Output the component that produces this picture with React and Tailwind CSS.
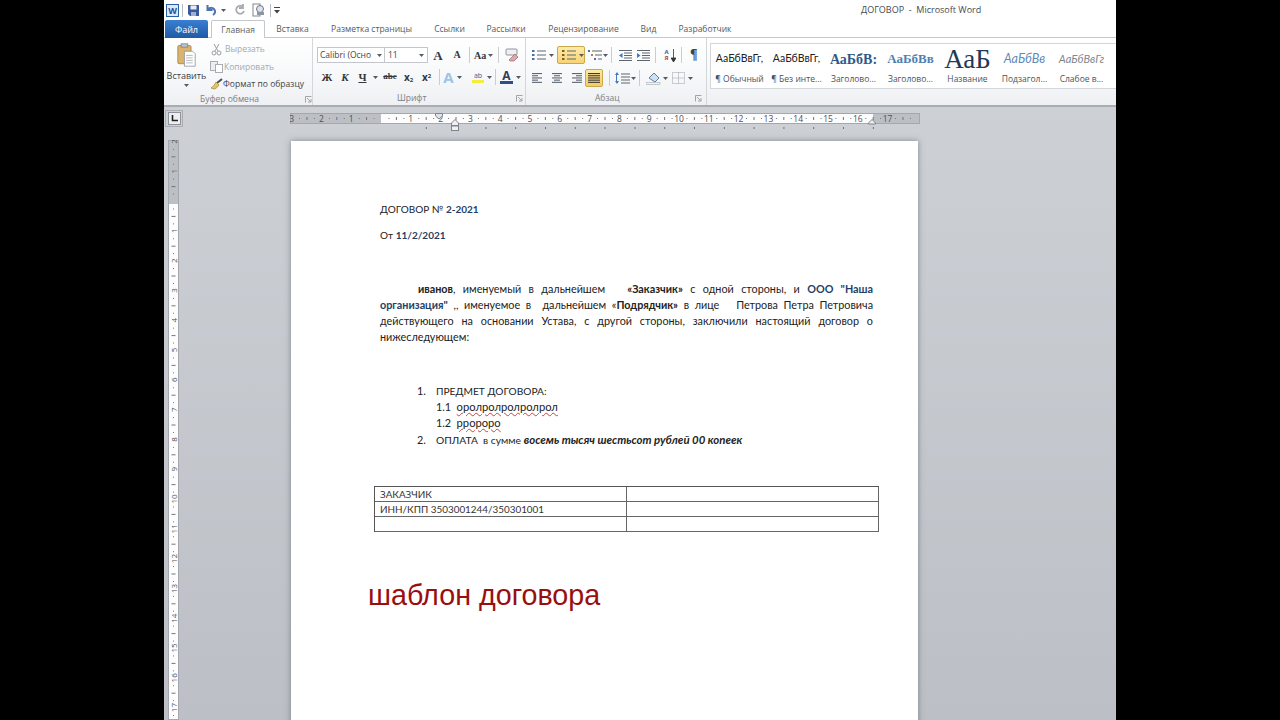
const tabs = [
  ["Вставка", "w-[31px] ml-[12px]"],
  ["Разметка страницы", "w-[81px] ml-[23px]"],
  ["Ссылки", "w-[31px] ml-[22px]"],
  ["Рассылки", "w-[38px] ml-[22px]"],
  ["Рецензирование", "w-[71px] ml-[23px]"],
  ["Вид", "w-[15px] ml-[22px]"],
  ["Разработчик", "w-[54px] ml-[22px]"],
];

const Sep = ({ h = "h-[16px]" }) => <div className={`w-px ${h} bg-[#c9ccd1] shrink-0`} />;

const Caret = ({ className = "" }) => (
  <svg width="5" height="3" viewBox="0 0 5 3" className={`shrink-0 ${className}`}>
    <path d="M0 0h5L2.500 3z" fill="#555b63" />
  </svg>
);

const Launcher = () => (
  <svg width="7" height="7" viewBox="0 0 7 7" className="shrink-0">
    <path d="M.5 6.500v-6h6M2 2l3.500 3.500M6 3v3H3" fill="none" stroke="#8b9097" strokeWidth=".8" />
  </svg>
);

const Lines = ({ kind }) => {
  const rows = {
    left: [10, 6, 10, 6, 10],
    center: [10, 6, 10, 6, 10],
    right: [10, 6, 10, 6, 10],
    justify: [12, 12, 12, 12, 12],
  }[kind];
  return (
    <svg width="12" height="11" viewBox="0 0 12 11">
      {rows.map((w, i) => {
        const x = kind === "center" ? (12 - w) / 2 : kind === "right" ? 12 - w : 0;
        return <rect key={i} x={x} y={i * 2.2} width={w} height="1.100" fill={kind === "justify" ? "#3d3a2d" : "#5d6670"} />;
      })}
    </svg>
  );
};

const ListIcon = ({ marker }) => (
  <svg width="14" height="12" viewBox="0 0 14 12">
    {[1, 5, 9].map((y) => (
      <g key={y}>
        <rect x="0" y={y} width="2.500" height="2" fill={marker} />
        <rect x="5" y={y + 0.5} width="9" height="1" fill="#5d6670" />
      </g>
    ))}
  </svg>
);

const MultiLevel = () => (
  <svg width="14" height="12" viewBox="0 0 14 12">
    <rect x="0" y="1" width="2" height="2" fill="#4a6fa5" />
    <rect x="4" y="1.500" width="10" height="1" fill="#5d6670" />
    <rect x="3" y="5" width="2" height="2" fill="#b5813a" />
    <rect x="7" y="5.500" width="7" height="1" fill="#5d6670" />
    <rect x="6" y="9" width="2" height="2" fill="#4a6fa5" />
    <rect x="10" y="9.500" width="4" height="1" fill="#5d6670" />
  </svg>
);

const Outdent = ({ flip }) => (
  <svg width="13" height="11" viewBox="0 0 13 11">
    {[0, 2.5, 5, 7.5, 10].map((y, i) => (
      <rect key={y} x={i % 4 === 0 ? 0 : 5} y={y} width={i % 4 === 0 ? 13 : 8} height="1" fill="#5d6670" />
    ))}
    <path d={flip ? "M0 3l3.500 2.500L0 8z" : "M3.500 3L0 5.500 3.500 8z"} fill="#3f79b8" />
  </svg>
);

const Gallery = [
  ["АаБбВвГг,", "¶ Обычный", "text-[10.5px] text-[#222]", "font-['Lato',sans-serif]"],
  ["АаБбВвГг,", "¶ Без инте...", "text-[10.5px] text-[#222]", "font-['Lato',sans-serif]"],
  ["АаБбВ:", "Заголово...", "text-[14px] font-bold text-[#2f5a8a]", "font-['Liberation_Serif',serif]"],
  ["АаБбВв", "Заголово...", "text-[13px] font-bold text-[#4f7fb0]", "font-['Liberation_Serif',serif]"],
  ["АаБ", "Название", "text-[27px] leading-[20px] -mt-[1px] text-[#1f3a58]", "font-['Liberation_Serif',serif]"],
  ["АаБбВв", "Подзагол...", "text-[12.5px] italic text-[#5f8ab5]", "font-['Lato',sans-serif]"],
  ["АаБбВвГг", "Слабое в...", "text-[11px] italic text-[#7f8790]", "font-['Lato',sans-serif]"],
];

const hTicks = Array.from({ length: 42 }, (_, i) => i - 6);
const hNumbers = [-3, -2, -1, 1, 2, 3, 4, 5, 6, 7, 8, 9, 10, 11, 12, 13, 14, 15, 16, 17];

const HorizontalRuler = () => (
  <svg width="632" height="20" viewBox="0 0 632 20" className="mt-[5px] ml-[107px] shrink-0">
    <rect x="0.500" y="1.500" width="629" height="10" fill="#fdfdfd" stroke="#a4a8ae" />
    <rect x="1" y="2" width="90" height="9" fill="#bcc0c5" />
    <rect x="583" y="2" width="46" height="9" fill="#bcc0c5" />
    {hNumbers.map((n) => (
      <text key={n} x={91 + n * 29.8} y="10" fontSize="8.500" textAnchor="middle" fill="#4c5157" fontFamily="'Open Sans', sans-serif">
        {Math.abs(n)}
      </text>
    ))}
    {hTicks.map((n) => {
      const x = 91 + (n + 0.5) * 14.900 * 2;
      return <rect key={n} x={x} y="5" width="1" height="3" fill="#71767c" />;
    })}
    {hTicks.map((n) => (
      <g key={n}>
        <rect x={91 + (n + 0.25) * 29.8} y="6" width="1" height="1" fill="#71767c" />
        <rect x={91 + (n + 0.75) * 29.8} y="6" width="1" height="1" fill="#71767c" />
      </g>
    ))}
    {[1, 2, 3, 4, 5, 6, 7, 8, 9, 10, 11, 12, 13, 14, 15, 16].map((n) => (
      <rect key={n} x={91 + n * 29.8 + 15} y="15" width="1" height="2" fill="#6d7278" />
    ))}
    <path d="M145.500 1.500h7v2.500l-3.500 3-3.500-3z" fill="#dfe2e6" stroke="#7f848a" />
    <path d="M161.500 11l3.500-3.500 3.500 3.500v2.500h-7z" fill="#eef0f2" stroke="#7f848a" />
    <rect x="161.500" y="14" width="7" height="4.500" fill="#eef0f2" stroke="#7f848a" />
    <path d="M578.500 11l3.500-3.500 3.500 3.500v1h-7z" fill="#eef0f2" stroke="#7f848a" />
  </svg>
);

const VerticalRuler = () => {
  const numbers = [-2, -1, 1, 2, 3, 4, 5, 6, 7, 8, 9, 10, 11, 12, 13, 14, 15, 16, 17];
  const ticks = Array.from({ length: 22 }, (_, i) => i - 3);
  return (
    <svg width="11" height="580" viewBox="0 0 11 580" className="ml-[4px] shrink-0">
      <rect x="0.500" y="0.500" width="10" height="579" fill="#fdfdfd" stroke="#a4a8ae" />
      <rect x="1" y="1" width="9" height="63" fill="#bcc0c5" />
      {numbers.map((n) => {
        const y = 61 + n * 29.8;
        return (
          <text key={n} x="5.500" y={y} fontSize="8" textAnchor="middle" dominantBaseline="central" fill="#4c5157" fontFamily="'Open Sans', sans-serif" transform={`rotate(-90 5.500 ${y})`}>
            {Math.abs(n)}
          </text>
        );
      })}
      {ticks.map((n) => (
        <g key={n}>
          <rect x="3.500" y={61 + (n + 0.5) * 29.8} width="4" height="1" fill="#71767c" />
          <rect x="5" y={61 + (n + 0.25) * 29.8} width="1" height="1" fill="#71767c" />
          <rect x="5" y={61 + (n + 0.75) * 29.8} width="1" height="1" fill="#71767c" />
        </g>
      ))}
    </svg>
  );
};

const Squiggle = ({ children }) => (
  <span className="text-[11.2px] underline decoration-wavy decoration-[#d04040] decoration-[0.6px] underline-offset-1">{children}</span>
);

const JustLine = ({ children, className = "" }) => (
  <div className={`text-justify [text-align-last:justify] ${className}`}>{children}</div>
);

export default function App() {
  return (
    <div className="w-[1280px] h-[720px] overflow-hidden bg-black flex justify-center">
      <div className="w-[952px] h-full flex flex-col bg-white font-['Open_Sans',sans-serif] text-[#4a4f55]">
        {/* title bar */}
        <div className="h-[20px] flex items-center relative shrink-0">
          <div className="ml-[2px] w-[13px] h-[13px] bg-[#dbe8f7] border border-[#2a5fa5] flex items-center justify-center text-[9px] leading-none font-bold text-[#1c4f9c]">W</div>
          <div className="ml-[3px] w-px h-[13px] bg-[#b8bcc2]" />
          <svg width="13" height="13" viewBox="0 0 13 13" className="ml-[4px]">
            <path d="M1 1h11v11H3l-2-2z" fill="#3b5a9b" />
            <rect x="3.500" y="1.500" width="6" height="4" fill="#e8edf5" />
            <rect x="4" y="8" width="5" height="4" fill="#9fb2d2" />
          </svg>
          <svg width="11" height="12" viewBox="0 0 11 12" className="ml-[5px]">
            <path d="M2.500 1v5h5M2.500 6C4 3 9 3 10 7c.3 1.500-.5 3-2 4" fill="none" stroke="#4a74ad" strokeWidth="2" />
          </svg>
          <Caret className="ml-[5px]" />
          <svg width="11" height="12" viewBox="0 0 11 12" className="ml-[8px]">
            <path d="M8.500 2.500A4 4 0 1 0 10 7M9 0v4H5" fill="none" stroke="#a9adb3" strokeWidth="1.800" />
          </svg>
          <svg width="13" height="14" viewBox="0 0 13 14" className="ml-[7px]">
            <rect x="1" y="1" width="7" height="12" fill="#fff" stroke="#7d8794" />
            <circle cx="8" cy="6" r="3.500" fill="#dce3ea" stroke="#6d7885" />
            <rect x="5" y="9" width="7" height="3" fill="#8d97a3" />
          </svg>
          <div className="ml-[5px] w-px h-[13px] bg-[#b8bcc2]" />
          <svg width="6" height="7" viewBox="0 0 6 7" className="ml-[3px]">
            <rect width="6" height="1" fill="#444" />
            <path d="M0 3h6L3 6.500z" fill="#444" />
          </svg>
          <div className="absolute left-[697px] top-[3px] text-[9px] leading-[14px] text-[#454a50] whitespace-pre">ДОГОВОР  -  Microsoft Word</div>
        </div>

        {/* tabs */}
        <div className="h-[18px] flex items-stretch text-[8.500px] text-[#555a60] shrink-0 border-b border-[#c4c7cc] relative">
          <div className="ml-px w-[43px] h-[18px] pt-px rounded-t-[2px] bg-gradient-to-b from-[#3a7fd0] to-[#1f5aa8] text-white flex items-center justify-center text-[9px]">Файл</div>
          <div className="ml-[3px] w-[54px] h-[18px] pt-px border border-b-0 border-[#c4c7cc] rounded-t-[2px] bg-white flex items-center justify-center text-[#5a5f66] z-10">Главная</div>
          {tabs.map(([name, size]) => (
            <div key={name} className={`${size} pt-px flex items-center justify-center whitespace-nowrap`}>{name}</div>
          ))}
        </div>

        {/* ribbon */}
        <div className="h-[69px] flex shrink-0 bg-gradient-to-b from-white via-[#f8f9fa] to-[#eef0f3] border-b-2 border-[#a9adb3] text-[8.500px]">
          {/* clipboard */}
          <div className="w-[149px] flex flex-col border-r border-[#d3d6da] shrink-0">
            <div className="h-[55px] flex">
              <div className="w-[45px] flex flex-col items-center pt-[5px]">
                <svg width="21" height="24" viewBox="0 0 23 29" className="mb-[3px]">
                  <rect x="1" y="3" width="16" height="22" rx="1.500" fill="#dcb36d" stroke="#a98445" />
                  <rect x="5" y="1" width="8" height="4" fill="#bfc3c8" stroke="#7e8288" />
                  <path d="M9 10h10l3 3v15H9z" fill="#fff" stroke="#8f959c" />
                  <path d="M11 15h8M11 18h8M11 21h8M11 24h8" stroke="#a8adb3" />
                </svg>
                <div className="text-[#3f444a] text-[9px] leading-[12px]">Вставить</div>
                <Caret className="mt-[2px]" />
              </div>
              <div className="flex flex-col pt-[3px]">
                <div className="h-[18px] flex items-center text-[#a5a9ae]">
                  <svg width="11" height="13" viewBox="0 0 11 13" className="ml-[2px] mr-[2px]">
                    <path d="M3 1l4 7M8 1L4 8" stroke="#9a9ea4" fill="none" />
                    <circle cx="3" cy="10" r="2" fill="none" stroke="#9a9ea4" />
                    <circle cx="8" cy="10" r="2" fill="none" stroke="#9a9ea4" />
                  </svg>
                  <span className="ml-px">Вырезать</span>
                </div>
                <div className="h-[18px] flex items-center text-[#a5a9ae]">
                  <svg width="13" height="12" viewBox="0 0 13 12" className="ml-[1px] mr-[1px]">
                    <rect x=".5" y=".5" width="7" height="9" fill="#eceef0" stroke="#a9adb2" />
                    <rect x="5.500" y="3.500" width="7" height="8" fill="#fff" stroke="#a9adb2" />
                  </svg>
                  <span>Копировать</span>
                </div>
                <div className="h-[18px] flex items-center text-[#3f444a] whitespace-nowrap">
                  <svg width="13" height="12" viewBox="0 0 13 12" className="ml-[1px]">
                    <path d="M7 5l5-4" stroke="#4a4f55" strokeWidth="2" />
                    <path d="M1 10c2-1 4-4 5-6l3 3c-2 3-4 4-5 4z" fill="#e6c45f" stroke="#a28434" strokeWidth=".7" />
                  </svg>
                  <span className="tracking-[0.03px]">Формат по образцу</span>
                </div>
              </div>
            </div>
            <div className="flex-1 flex items-center text-[#7b8086]">
              <span className="ml-[36px] w-[106px]">Буфер обмена</span>
              <Launcher />
            </div>
          </div>

          {/* font */}
          <div className="w-[213px] flex flex-col border-r border-[#d3d6da] shrink-0">
            <div className="h-[55px] flex flex-col">
              <div className="flex items-center h-[16px] mt-[9px] ml-[4px]">
                <div className="w-[68px] h-[16px] border border-[#c3c7cc] bg-white flex items-center justify-between px-[2px] text-[#3f444a] text-[8.500px] whitespace-nowrap">
                  <span>Calibri (Осно</span>
                  <Caret />
                </div>
                <div className="w-[43px] h-[16px] border border-l-0 border-[#c3c7cc] bg-white flex items-center justify-between px-[3px] text-[#3f444a]">
                  <span>11</span>
                  <Caret />
                </div>
                <div className="w-[16px] ml-[2px] text-center font-['Liberation_Serif',serif] font-bold text-[13px] text-[#33383e] leading-none">A</div>
                <div className="w-[18px] ml-[2px] text-center font-['Liberation_Serif',serif] font-bold text-[10px] text-[#33383e] leading-none">A</div>
                <div className="ml-[3px]"><Sep /></div>
                <div className="ml-[4px] text-[10px] font-['Liberation_Serif',serif] font-bold text-[#33383e] w-[12px]">Aa</div>
                <Caret className="ml-[2px]" />
                <div className="ml-[5px]"><Sep /></div>
                <svg width="15" height="14" viewBox="0 0 15 14" className="ml-[5px]">
                  <rect x="2" y="1" width="11" height="6" rx="1" fill="#eef0f3" stroke="#8f959c" />
                  <path d="M5 12l6-6 3 3-4 4H6z" fill="#e6a3a8" stroke="#8f6a70" strokeWidth=".7" />
                </svg>
              </div>
              <div className="flex items-center h-[18px] mt-[5px] ml-[4px] text-[#33383e]">
                <div className="w-[18px] ml-[1px] text-center font-['Liberation_Serif',serif] font-bold text-[11px]">Ж</div>
                <div className="w-[18px] text-center font-['Liberation_Serif',serif] italic font-bold text-[11px]">К</div>
                <div className="w-[17px] text-center font-['Liberation_Serif',serif] font-bold underline text-[11px]">Ч</div>
                <Caret className="ml-[2px]" />
                <div className="w-[20px] ml-[2px] text-center font-['Liberation_Serif',serif] font-bold text-[9px] line-through">abc</div>
                <div className="w-[17px] text-center font-bold text-[10px]">x<sub className="text-[6px]">2</sub></div>
                <div className="w-[19px] text-center font-bold text-[10px]">x<sup className="text-[6px]">2</sup></div>
                <div className="ml-[3px]"><Sep /></div>
                <div className="w-[13px] ml-[2px] text-center font-bold text-[15px] leading-none text-[#9ec3ea]">A</div>
                <Caret className="ml-[2px]" />
                <div className="ml-[9px] w-[14px] flex flex-col items-center leading-none">
                  <span className="text-[7px] text-[#3b5a9b] leading-[9px]">ab</span>
                  <div className="w-[12px] h-[3px] bg-[#f6ec3c]" />
                </div>
                <Caret className="ml-[2px]" />
                <div className="ml-[3px]"><Sep /></div>
                <div className="ml-[4px] w-[13px] flex flex-col items-center leading-none">
                  <span className="font-bold text-[12px] leading-[11px] text-[#2f3e56]">A</span>
                  <div className="w-[13px] h-[3px] bg-[#2a4f8a]" />
                </div>
                <Caret className="ml-[3px]" />
              </div>
            </div>
            <div className="flex-1 flex items-center text-[#7b8086]">
              <span className="ml-[84px] w-[119px]">Шрифт</span>
              <Launcher />
            </div>
          </div>

          {/* paragraph */}
          <div className="w-[181px] flex flex-col border-r border-[#d3d6da] shrink-0">
            <div className="h-[55px] flex flex-col">
              <div className="flex items-center h-[18px] mt-[8px]">
                <div className="ml-[6px]"><ListIcon marker="#4a6fa5" /></div>
                <Caret className="ml-[3px]" />
                <div className="ml-[3px] w-[28px] h-[18px] rounded-[2px] border border-[#c9a94b] bg-gradient-to-b from-[#fdeaa8] to-[#f7d374] flex items-center">
                  <div className="ml-[4px]"><ListIcon marker="#7a6220" /></div>
                  <div className="ml-[2px] h-full w-px bg-[#c9a94b]" />
                  <Caret className="ml-[1px]" />
                </div>
                <div className="ml-[3px]"><MultiLevel /></div>
                <Caret className="ml-[1px]" />
                <div className="ml-[3px]"><Sep /></div>
                <div className="ml-[7px]"><Outdent /></div>
                <div className="ml-[5px]"><Outdent flip /></div>
                <div className="ml-[5px]"><Sep /></div>
                <div className="ml-[7px] w-[7px] flex flex-col text-[6px] leading-[6px] font-bold text-center">
                  <span className="text-[#3b5a9b]">A</span>
                  <span className="text-[#a94a3c]">Я</span>
                </div>
                <svg width="5" height="13" viewBox="0 0 5 13" className="ml-px">
                  <path d="M2.500 0v11M0 9l2.500 4L5 9z" stroke="#333" fill="#333" strokeWidth=".8" />
                </svg>
                <div className="ml-[5px]"><Sep /></div>
                <div className="ml-[8px] text-[14px] font-bold leading-none text-[#3f444a] font-['Liberation_Serif',serif]">¶</div>
              </div>
              <div className="flex items-center h-[18px] mt-[5px]">
                <div className="ml-[6px]"><Lines kind="left" /></div>
                <div className="ml-[7px]"><Lines kind="center" /></div>
                <div className="ml-[7px]"><Lines kind="right" /></div>
                <div className="ml-[3px] w-[18px] h-[18px] rounded-[2px] border border-[#c9a94b] bg-gradient-to-b from-[#fdeaa8] to-[#f7c968] flex items-center justify-center">
                  <Lines kind="justify" />
                </div>
                <div className="ml-[6px]"><Sep /></div>
                <svg width="16" height="12" viewBox="0 0 16 12" className="ml-[4px]">
                  <path d="M3 0l2 3H1zM3 12l2-3H1z" fill="#3f79b8" />
                  <path d="M2.500 3v6" stroke="#3f79b8" />
                  <path d="M7 2h9M7 5h9M7 8h9M7 11h9" stroke="#5d6670" />
                </svg>
                <Caret className="ml-px" />
                <div className="ml-[3px]"><Sep /></div>
                <svg width="15" height="14" viewBox="0 0 15 14" className="ml-[6px]">
                  <path d="M3 7l5-5 5 5-4 4z" fill="#cfe0f0" stroke="#5f7f9f" />
                  <rect x="0" y="11.500" width="14" height="2" fill="#eef0f3" stroke="#9a9ea4" strokeWidth=".5" />
                </svg>
                <Caret className="ml-[2px]" />
                <div className="ml-[4px]">
                  <svg width="13" height="12" viewBox="0 0 13 12">
                    <path d="M.5.500h12v11H.5zM.5 6h12M6.500.500v11" fill="none" stroke="#9ca1a7" strokeDasharray="1 1" />
                  </svg>
                </div>
                <Caret className="ml-[3px]" />
              </div>
            </div>
            <div className="flex-1 flex items-center text-[#7b8086]">
              <span className="ml-[69px] w-[100px]">Абзац</span>
              <Launcher />
            </div>
          </div>

          {/* styles */}
          <div className="flex-1 min-w-0 overflow-hidden pt-[5px] pl-[3px]">
            <div className="h-[46px] border border-r-0 border-[#d3d6da] bg-white flex overflow-hidden">
              {Gallery.map(([sample, label, look, family]) => (
                <div key={sample + label} className="w-[57px] shrink-0 flex flex-col items-center">
                  <div className={`h-[26px] mt-[2px] flex items-center whitespace-nowrap ${look} ${family}`}>{sample}</div>
                  <div className="text-[#4d5258] text-[8.500px] leading-[14px] whitespace-nowrap">{label}</div>
                </div>
              ))}
            </div>
          </div>
        </div>

        {/* workspace */}
        <div className="flex-1 min-h-0 overflow-hidden bg-gradient-to-b from-[#cdd1d6] to-[#bcc0c6]">
          <div className="h-[33px] flex items-start">
            <div className="ml-px mt-[3px] w-[18px] h-[17px] border border-[#a9adb3] flex items-center justify-center shrink-0">
              <div className="w-[13px] h-[13px] border border-[#8f9399] bg-[#eceef0] flex items-center justify-center">
                <svg width="7" height="7" viewBox="0 0 7 7">
                  <path d="M1.500 0v5.500H7" fill="none" stroke="#222" strokeWidth="1.600" />
                </svg>
              </div>
            </div>
            <HorizontalRuler />
          </div>
          <div className="flex items-start">
            <div className="w-[127px] shrink-0"><VerticalRuler /></div>
            <div className="w-[627px] h-[600px] mt-px bg-white shadow-[0_0_6px_rgba(70,75,85,0.55)] shrink-0 pl-[83px] pt-[60px] font-['Lato','Noto_Sans',sans-serif] text-[#222] text-[10.800px] leading-[16px]">
              <div className="ml-[6px] w-[493px]">
                <div className="text-[10px]">ДОГОВОР № <b className="text-[#1f3f66]">2-2021</b></div>
                <div className="mt-[10px] text-[10px]">От <b className="text-[#1f3f66]">11/2/2021</b></div>
                <div className="mt-[38px]">
                  <JustLine className="pl-[38px]">
                    <b>иванов</b>, именуемый в дальнейшем &nbsp; <b>«Заказчик»</b> с одной стороны, и <b className="text-[#1f3f66]">ООО "Наша</b>
                  </JustLine>
                  <JustLine>
                    <b className="text-[#1f3f66]">организация"</b> ,, именуемое в &nbsp;дальнейшем «<b>Подрядчик»</b> в лице &nbsp; Петрова Петра Петровича
                  </JustLine>
                  <JustLine>действующего на основании Устава, с другой стороны, заключили настоящий договор о</JustLine>
                  <div>нижеследующем:</div>
                </div>
                <div className="mt-[38px]">
                  <div className="flex"><span className="ml-[37px] w-[19px]">1.</span><span className="text-[10.200px]">ПРЕДМЕТ ДОГОВОРА:</span></div>
                  <div className="ml-[56px]">1.1 &nbsp;<Squiggle>оролролролролрол</Squiggle></div>
                  <div className="ml-[56px]">1.2 &nbsp;<Squiggle>рророро</Squiggle></div>
                  <div className="flex mt-px"><span className="ml-[37px] w-[19px]">2.</span><span className="whitespace-pre text-[10.300px]">ОПЛАТА  в сумме <b className="text-[11.400px]"><i>восемь тысяч шестьсот рублей 00 копеек</i></b></span></div>
                </div>
              </div>
              <div className="mt-[38px] w-[505px] grid grid-cols-[252px_1fr] border-t border-l border-[#555] text-[#333]">
                {["ЗАКАЗЧИК", "", "ИНН/КПП 3503001244/350301001", "", "", ""].map((cell, i) => (
                  <div key={i} className="h-[15px] border-r border-b border-[#666] pl-[5px] text-[9.900px] leading-[14px] whitespace-nowrap">{cell}</div>
                ))}
              </div>
              <div className="-ml-[6px] mt-[45px] text-[28.700px] leading-[36px] text-[#990f0f] font-['Liberation_Sans',sans-serif] whitespace-nowrap">шаблон договора</div>
            </div>
          </div>
        </div>
      </div>
    </div>
  );
}
